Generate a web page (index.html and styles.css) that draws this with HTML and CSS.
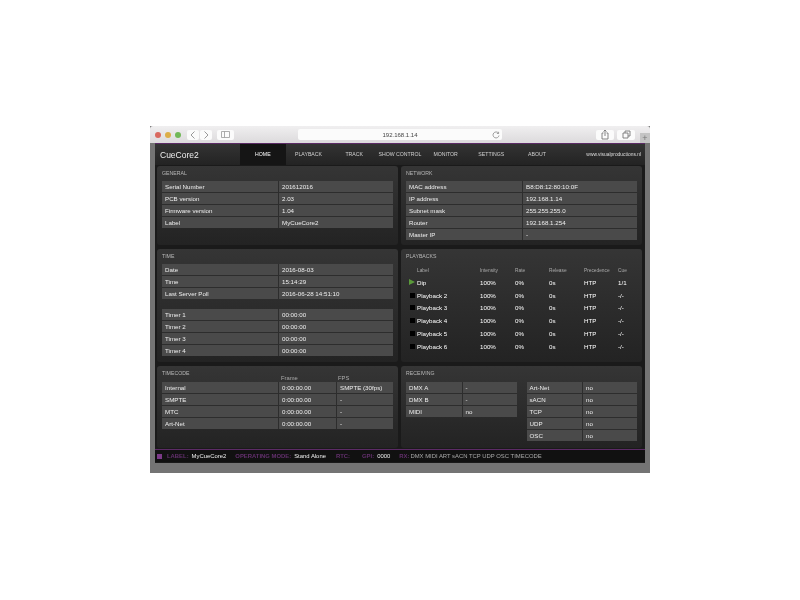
FILE: index.html
```html
<!DOCTYPE html>
<html lang="en">
<head>
    <meta charset="UTF-8">
    <title>CueCore2</title>
    <link rel="stylesheet" href="styles.css">
</head>
<body>
    <div class="window">
        <div class="toolbar">
            <span class="light red"></span>
            <span class="light yellow"></span>
            <span class="light green"></span>
            <div class="tool-btn nav-btn back-btn">
                <svg width="12" height="10" viewBox="0 0 12 10"><path d="M7.500 1.500 4 5l3.500 3.500" fill="none" stroke="#999" stroke-width="1"/></svg>
            </div>
            <div class="tool-btn nav-btn">
                <svg width="12" height="10" viewBox="0 0 12 10"><path d="M4.500 1.500 8 5 4.500 8.500" fill="none" stroke="#999" stroke-width="1"/></svg>
            </div>
            <div class="tool-btn side-btn">
                <svg width="9" height="7" viewBox="0 0 9 7"><path d="M.5.5h8v6h-8zM3.500.5v6" fill="none" stroke="#999" stroke-width=".8"/></svg>
            </div>
            <div class="url">
                <span>192.168.1.14</span>
                <svg class="reload" width="8" height="8" viewBox="0 0 8 8"><path d="M6.500 2.200A3 3 0 1 0 7 4.500M6.600.8v1.700H4.900" fill="none" stroke="#888" stroke-width=".8"/></svg>
            </div>
            <div class="tool-btn share-btn">
                <svg width="8" height="11" viewBox="0 0 8 11"><path d="M2.500 4H1v6h6V4H5.500M4 7V1M2.500 2.500 4 1l1.500 1.500" fill="none" stroke="#777" stroke-width=".9"/></svg>
            </div>
            <div class="tool-btn tabs-btn">
                <svg width="9" height="9" viewBox="0 0 9 9"><path d="M1 3h5v5H1zM3 3V1h5v5H6" fill="none" stroke="#777" stroke-width=".9"/></svg>
            </div>
            <div class="new-tab">+</div>
        </div>

        <div class="app">
            <div class="header">
                <div class="brand">CueCore2</div>
                <div class="tab active">HOME</div>
                <div class="tab">PLAYBACK</div>
                <div class="tab">TRACK</div>
                <div class="tab">SHOW CONTROL</div>
                <div class="tab">MONITOR</div>
                <div class="tab">SETTINGS</div>
                <div class="tab">ABOUT</div>
                <div class="site">www.visualproductions.nl</div>
            </div>

            <div class="panels">
                <div class="panel">
                    <h2>GENERAL</h2>
                    <table class="grid">
                        <tr><td class="half">Serial Number</td><td>201612016</td></tr>
                        <tr><td>PCB version</td><td>2.03</td></tr>
                        <tr><td>Firmware version</td><td>1.04</td></tr>
                        <tr><td>Label</td><td>MyCueCore2</td></tr>
                    </table>
                </div>
                <div class="panel">
                    <h2>NETWORK</h2>
                    <table class="grid">
                        <tr><td class="half">MAC address</td><td>B8:D8:12:80:10:0F</td></tr>
                        <tr><td>IP address</td><td>192.168.1.14</td></tr>
                        <tr><td>Subnet mask</td><td>255.255.255.0</td></tr>
                        <tr><td>Router</td><td>192.168.1.254</td></tr>
                        <tr><td>Master IP</td><td>-</td></tr>
                    </table>
                </div>

                <div class="panel">
                    <h2>TIME</h2>
                    <table class="grid">
                        <tr><td class="half">Date</td><td>2016-08-03</td></tr>
                        <tr><td>Time</td><td>15:14:29</td></tr>
                        <tr><td>Last Server Poll</td><td>2016-06-28 14:51:10</td></tr>
                    </table>
                    <table class="grid timers">
                        <tr><td class="half">Timer 1</td><td>00:00:00</td></tr>
                        <tr><td>Timer 2</td><td>00:00:00</td></tr>
                        <tr><td>Timer 3</td><td>00:00:00</td></tr>
                        <tr><td>Timer 4</td><td>00:00:00</td></tr>
                    </table>
                </div>
                <div class="panel">
                    <h2>PLAYBACKS</h2>
                    <table class="playbacks">
                        <tr class="pb-head"><th class="pb-state"></th><th class="pb-label">Label</th><th>Intensity</th><th>Rate</th><th>Release</th><th>Precedence</th><th>Cue</th></tr>
                        <tr><td class="pb-state"><span class="play"></span></td><td>Dip</td><td>100%</td><td>0%</td><td>0s</td><td>HTP</td><td>1/1</td></tr>
                        <tr><td class="pb-state"><span class="stop"></span></td><td>Playback 2</td><td>100%</td><td>0%</td><td>0s</td><td>HTP</td><td>-/-</td></tr>
                        <tr><td class="pb-state"><span class="stop"></span></td><td>Playback 3</td><td>100%</td><td>0%</td><td>0s</td><td>HTP</td><td>-/-</td></tr>
                        <tr><td class="pb-state"><span class="stop"></span></td><td>Playback 4</td><td>100%</td><td>0%</td><td>0s</td><td>HTP</td><td>-/-</td></tr>
                        <tr><td class="pb-state"><span class="stop"></span></td><td>Playback 5</td><td>100%</td><td>0%</td><td>0s</td><td>HTP</td><td>-/-</td></tr>
                        <tr><td class="pb-state"><span class="stop"></span></td><td>Playback 6</td><td>100%</td><td>0%</td><td>0s</td><td>HTP</td><td>-/-</td></tr>
                    </table>
                </div>

                <div class="panel tall-head">
                    <h2>TIMECODE</h2>
                    <div class="tc-head"><span class="tc-frame">Frame</span><span>FPS</span></div>
                    <table class="grid">
                        <tr><td class="half">Internal</td><td class="quarter">0:00:00.00</td><td>SMPTE (30fps)</td></tr>
                        <tr><td>SMPTE</td><td>0:00:00.00</td><td>-</td></tr>
                        <tr><td>MTC</td><td>0:00:00.00</td><td>-</td></tr>
                        <tr><td>Art-Net</td><td>0:00:00.00</td><td>-</td></tr>
                    </table>
                </div>
                <div class="panel tall-head">
                    <h2>RECEIVING</h2>
                    <div class="receiving">
                        <table class="grid">
                            <tr><td class="half">DMX A</td><td>-</td></tr>
                            <tr><td>DMX B</td><td>-</td></tr>
                            <tr><td>MIDI</td><td>no</td></tr>
                        </table>
                        <table class="grid">
                            <tr><td class="half">Art-Net</td><td>no</td></tr>
                            <tr><td>sACN</td><td>no</td></tr>
                            <tr><td>TCP</td><td>no</td></tr>
                            <tr><td>UDP</td><td>no</td></tr>
                            <tr><td>OSC</td><td>no</td></tr>
                        </table>
                    </div>
                </div>
            </div>

            <div class="status">
                <span class="led"></span>
                <b class="s-label">LABEL:</b><span class="s-value">MyCueCore2</span>
                <b class="s-mode">OPERATING MODE:</b><span class="s-value">Stand Alone</span>
                <b class="s-rtc">RTC:</b>
                <b class="s-gpi">GPI:</b><span class="s-value">0000</span>
                <b class="s-rx">RX:</b><span class="s-rxlist">DMX MIDI ART sACN TCP UDP OSC TIMECODE</span>
            </div>
        </div>
    </div>
</body>
</html>
```

FILE: styles.css
```css
body {
    margin: 0;
    background-color: white;
    font-family: "Liberation Sans", Arial, sans-serif;
}
.window {
    width: 500px;
    height: 347px;
    margin: 126px 0 0 150px;
    background-color: #747474;
    display: flex;
    flex-direction: column;
    filter: blur(0.3px);
}
.toolbar {
    height: 17px;
    background: linear-gradient(#f0eff0, #dcdadc);
    border-radius: 3px 3px 0 0;
    display: flex;
    align-items: center;
    padding-left: 5px;
    position: relative;
}
.light {
    width: 6px;
    height: 6px;
    border-radius: 50%;
    margin-right: 4px;
}
.light.red { background-color: #d9695f; }
.light.yellow { background-color: #dcae48; }
.light.green { background-color: #71b858; }
.tool-btn {
    height: 10px;
    background-color: #fbfbfb;
    border-radius: 2px;
    display: flex;
    align-items: center;
    justify-content: center;
}
.nav-btn {
    width: 12px;
    margin-right: 1px;
}
.back-btn { margin-left: 2px; }
.side-btn {
    width: 17px;
    margin-left: 4px;
}
.url {
    width: 204px;
    height: 11px;
    margin-left: 64px;
    background-color: #fbfbfb;
    border-radius: 2px;
    font-size: 6px;
    color: #444;
    display: flex;
    align-items: center;
    justify-content: center;
    position: relative;
}
.reload {
    position: absolute;
    right: 2px;
    top: 2px;
}
.share-btn {
    width: 18px;
    margin-left: 94px;
}
.tabs-btn {
    width: 18px;
    margin-left: 3px;
}
.new-tab {
    position: absolute;
    right: 0;
    bottom: 0;
    width: 10px;
    height: 10px;
    background-color: #c4c4c4;
    color: #777;
    font-size: 9px;
    line-height: 10px;
    text-align: center;
}
.app {
    flex: none;
    height: 319px;
    margin: 0 5px;
    background-color: #1a1a1a;
    border-top: 1px solid #5c2b66;
    display: flex;
    flex-direction: column;
}
.header {
    height: 21px;
    background: linear-gradient(#333, #232323);
    display: flex;
    align-items: center;
    color: #ccc;
    flex: none;
}
.brand {
    width: 85px;
    padding-left: 5px;
    box-sizing: border-box;
    font-size: 8.5px;
    color: #eee;
}
.tab {
    width: 45.7px;
    height: 21px;
    line-height: 21px;
    text-align: center;
    font-size: 5.2px;
    white-space: nowrap;
    color: #d0d0d0;
}
.tab.active {
    background-color: #151515;
    color: #fff;
}
.site {
    flex: 1;
    text-align: right;
    padding-right: 4px;
    font-size: 4.9px;
    color: #ddd;
    white-space: nowrap;
}
.panels {
    display: grid;
    grid-template-columns: 241px 241px;
    grid-template-rows: 79px 113px 82px;
    column-gap: 3px;
    row-gap: 4px;
    padding: 1px 3px 0 2px;
    flex: none;
}
.panel {
    background: linear-gradient(#353535, #232323);
    border-radius: 3px;
    padding: 0 5px;
    position: relative;
}
h2 {
    margin: 0;
    height: 15px;
    line-height: 15px;
    font-size: 5.2px;
    font-weight: normal;
    color: #b8b8b8;
}
.tall-head h2 { height: 16px; }
table {
    border-collapse: separate;
    border-spacing: 0;
}
.grid {
    width: 231px;
    table-layout: fixed;
    font-size: 6.2px;
    color: #eee;
    background-color: #4a4a4a;
}
.grid td {
    height: 12px;
    padding: 0 3px;
    box-sizing: border-box;
    border-bottom: 1px solid #2d2d2d;
    white-space: nowrap;
}
.grid tr:last-child td { border-bottom: none; height: 11px; }
.grid td + td {
    border-left: 1px solid #2d2d2d;
}
.half { width: 116px; }
.quarter { width: 58px; }
.timers { margin-top: 10px; }
.playbacks {
    width: 231px;
    table-layout: fixed;
    font-size: 6.2px;
    color: #fff;
}
.playbacks th {
    height: 12px;
    padding: 0;
    text-align: left;
    font-weight: normal;
    font-size: 4.8px;
    color: #aaa;
}
.playbacks td {
    height: 12.8px;
    padding: 0;
    white-space: nowrap;
}
.pb-state { width: 11px; }
.pb-label { width: 63px; }
.playbacks th:nth-child(3) { width: 35px; }
.playbacks th:nth-child(4) { width: 34px; }
.playbacks th:nth-child(5) { width: 35px; }
.playbacks th:nth-child(6) { width: 34px; }
.play {
    display: block;
    margin-left: 3px;
    width: 0;
    height: 0;
    border-left: 6px solid #5a9a3a;
    border-top: 3.500px solid transparent;
    border-bottom: 3.500px solid transparent;
}
.stop {
    display: block;
    margin-left: 4px;
    width: 5px;
    height: 5px;
    background-color: #000;
}
.tc-head {
    position: absolute;
    top: 9px;
    left: 124px;
    font-size: 5.800px;
    color: #aaa;
    display: flex;
}
.tc-frame { width: 57px; }
.receiving {
    display: flex;
    gap: 10px;
    align-items: flex-start;
}
.receiving .grid { width: 110.500px; }
.receiving .half { width: 55.500px; }
.status {
    flex: none;
    height: 12px;
    margin-top: 1px;
    background-color: #111;
    border-top: 1px solid #5c2b66;
    display: flex;
    align-items: center;
    font-size: 5.900px;
    color: #eee;
    white-space: nowrap;
}
.status b {
    color: #64306e;
}
.led {
    width: 5px;
    height: 5px;
    margin-left: 2px;
    background-color: #7b3a87;
}
.s-label { margin-left: 5px; }
.s-value { margin-left: 3px; }
.s-mode { margin-left: 9px; }
.s-rtc { margin-left: 10px; }
.s-gpi { margin-left: 12px; }
.s-rx { margin-left: 9px; }
.s-rxlist { margin-left: 1px; color: #aaa; }
```
